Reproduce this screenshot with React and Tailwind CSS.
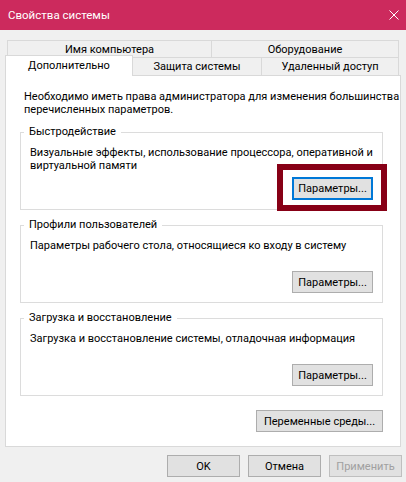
function Btn({ children, className = "" }) {
  return (
    <div
      className={
        "h-[22px] border border-[#adadad] bg-[#e1e1e1] flex items-center justify-center " +
        className
      }
    >
      {children}
    </div>
  );
}

function Group({ title, text, focused }) {
  return (
    <fieldset className="ml-[14px] w-[363px] h-[85px] border border-[#dcdcdc] p-0 m-0 min-w-0">
      <legend className="ml-[3px] px-[5px] leading-[14px]">{title}</legend>
      <div className="w-[361px] h-[70px] flex flex-col pl-[9px] pr-[9px] pt-[7px] pb-[9px]">
        <div className="whitespace-nowrap">{text}</div>
        <div className="mt-auto flex justify-end">
          {focused ? (
            <div className="relative">
              <div className="w-[81px] h-[23px] border-2 border-[#0078d7] bg-[#e1e1e1] flex items-center justify-center">
                Параметры...
              </div>
              <div className="absolute -left-[15px] -top-[13px] -right-[14px] -bottom-[11px] border-[6px] border-[#870016] pointer-events-none"></div>
            </div>
          ) : (
            <Btn className="w-[81px]">Параметры...</Btn>
          )}
        </div>
      </div>
    </fieldset>
  );
}

export default function App() {
  return (
    <div className="w-[406px] h-[482px] bg-[#f0f0f0] flex flex-col font-['Roboto',sans-serif] text-[11px] leading-[13px] text-black overflow-hidden">
      <div className="h-[30px] shrink-0 bg-[#cc2a5d] flex items-center justify-between pl-[8px] pr-[7px] text-white">
        <span className="text-[11.5px]">Свойства системы</span>
        <svg width="10" height="10" viewBox="0 0 10 10">
          <path d="M0.5 0.5 L9.5 9.5 M9.5 0.5 L0.5 9.5" stroke="white" strokeWidth="1" />
        </svg>
      </div>

      <div className="mt-[10px] flex ml-[7px] h-[17px] shrink-0">
        <div className="w-[204px] border-l border-t border-[#d9d9d9] flex items-center justify-center">
          Имя компьютера
        </div>
        <div className="w-[188px] border-l border-t border-r border-[#d9d9d9] flex items-center justify-center">
          Оборудование
        </div>
      </div>
      <div className="flex items-start h-[18px] ml-[5px] shrink-0">
        <div className="relative z-10 -mt-[2px] h-[21px] w-[128px] bg-white border-l border-t border-r border-[#d9d9d9] flex items-center justify-center pb-[1px]">
          Дополнительно
        </div>
        <div className="h-[18px] w-[129px] border-t border-r border-[#d9d9d9] flex items-center justify-center">
          Защита системы
        </div>
        <div className="h-[18px] w-[137px] border-t border-r border-[#d9d9d9] flex items-center justify-center">
          Удаленный доступ
        </div>
      </div>

      <div className="ml-[5px] w-[396px] h-[372px] shrink-0 bg-white border border-[#d9d9d9] flex flex-col">
        <div className="ml-[18px] mt-[14px] whitespace-nowrap">
          Необходимо иметь права администратора для изменения большинства
          <br />
          перечисленных параметров.
        </div>
        <div className="mt-[9px] flex flex-col gap-[8px]">
          <Group
            title="Быстродействие"
            focused
            text={
              <>
                Визуальные эффекты, использование процессора, оперативной и
                <br />
                виртуальной памяти
              </>
            }
          />
          <Group
            title="Профили пользователей"
            text="Параметры рабочего стола, относящиеся ко входу в систему"
          />
          <Group
            title="Загрузка и восстановление"
            text="Загрузка и восстановление системы, отладочная информация"
          />
        </div>
        <div className="mt-[14px] flex justify-end mr-[17px]">
          <Btn className="w-[127px]">Переменные среды...</Btn>
        </div>
      </div>

      <div className="mt-[8px] flex justify-end gap-[8px] pr-[4px]">
        <Btn className="w-[73px]">OK</Btn>
        <Btn className="w-[73px]">Отмена</Btn>
        <Btn className="w-[73px] bg-[#cccccc] border-[#bfbfbf] text-[#a0a0a0]">Применить</Btn>
      </div>
    </div>
  );
}
